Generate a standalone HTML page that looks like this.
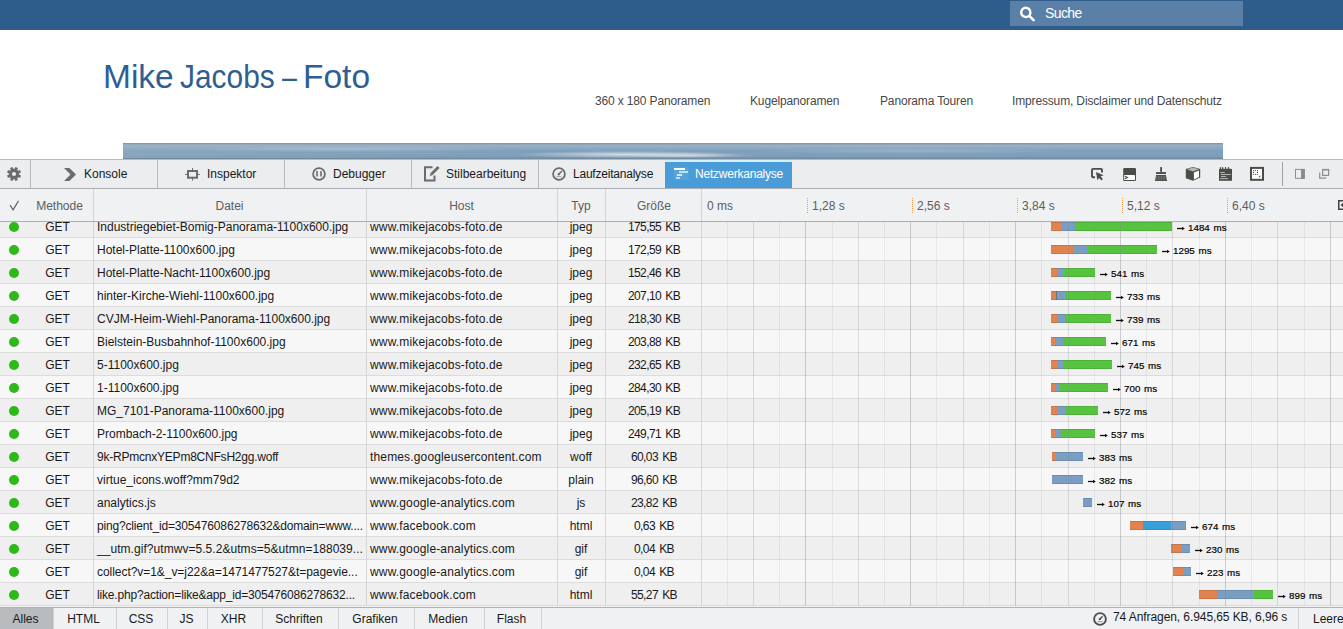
<!DOCTYPE html><html><head><meta charset="utf-8"><style>
*{margin:0;padding:0;box-sizing:border-box}
html,body{width:1343px;height:629px;overflow:hidden;background:#fff;font-family:"Liberation Sans",sans-serif}
.ab{position:absolute}
.t{position:absolute;white-space:nowrap;font-size:12px;line-height:14px}
.dev{color:#18191a}
</style></head><body>

<div class="ab" style="left:0;top:0;width:1343px;height:30px;background:#2e5d8c"></div>
<div class="ab" style="left:1010px;top:1px;width:233px;height:25px;background:#5a80a8"></div>
<svg class="ab" style="left:1018px;top:4px" width="20" height="20" viewBox="0 0 20 20"><circle cx="7.8" cy="8.4" r="4.6" fill="none" stroke="#fff" stroke-width="2.4"/><line x1="11.2" y1="11.8" x2="15.6" y2="16.2" stroke="#fff" stroke-width="2.6" stroke-linecap="round"/></svg>
<div class="t" style="left:1045px;top:5px;font-size:14px;line-height:16px;color:#fff;letter-spacing:-0.6px">Suche</div>
<div class="t" style="left:103px;top:57px;font-size:34px;line-height:39px;color:#2f5e93;transform:scaleX(0.985);transform-origin:0 0">Mike</div>
<div class="t" style="left:180px;top:57px;font-size:34px;line-height:39px;color:#2f5e93;transform:scaleX(0.879);transform-origin:0 0">Jacobs</div>
<div class="t" style="left:282px;top:57px;font-size:34px;line-height:39px;color:#2f5e93;transform:scaleX(0.79);transform-origin:0 0">–</div>
<div class="t" style="left:303px;top:57px;font-size:34px;line-height:39px;color:#2f5e93;transform:scaleX(0.985);transform-origin:0 0">Foto</div>
<div class="t" style="left:595px;top:94px;font-size:12px;line-height:14px;color:#474747;letter-spacing:-0.15px">360 x 180 Panoramen</div>
<div class="t" style="left:750px;top:94px;font-size:12px;line-height:14px;color:#474747;letter-spacing:-0.15px">Kugelpanoramen</div>
<div class="t" style="left:880px;top:94px;font-size:12px;line-height:14px;color:#474747;letter-spacing:-0.15px">Panorama Touren</div>
<div class="t" style="left:1012px;top:94px;font-size:12px;line-height:14px;color:#474747;letter-spacing:-0.15px">Impressum, Disclaimer und Datenschutz</div>
<div class="ab" style="left:123px;top:143px;width:1100px;height:16px;overflow:hidden;background:linear-gradient(180deg,#8797a6 0,#8797a6 1px,#9ab2c5 2px,#91adc4 25%,#7ea0bd 50%,#809fba 75%,#7b97b0 92%,#6c8195 100%)"><div class="ab" style="left:0;top:1px;width:420px;height:14px;background:linear-gradient(90deg,rgba(160,180,195,0.35),rgba(160,180,195,0.15) 50%,rgba(160,180,195,0))"></div><div class="ab" style="left:390px;top:8px;width:230px;height:7px;border-radius:50%;background:radial-gradient(closest-side,rgba(228,232,236,0.85),rgba(228,232,236,0))"></div><div class="ab" style="left:500px;top:10px;width:130px;height:5px;border-radius:50%;background:radial-gradient(closest-side,rgba(238,240,242,0.6),rgba(238,240,242,0))"></div><div class="ab" style="left:60px;top:3px;width:320px;height:6px;border-radius:50%;background:radial-gradient(closest-side,rgba(200,212,222,0.45),rgba(200,212,222,0))"></div><div class="ab" style="left:640px;top:5px;width:300px;height:6px;border-radius:50%;background:radial-gradient(closest-side,rgba(200,212,222,0.35),rgba(200,212,222,0))"></div></div>
<div class="ab" style="left:0;top:159px;width:1343px;height:30px;background:#ebedef;border-top:1px solid #b6babf;border-bottom:1px solid #aaaeb3"></div>
<div class="ab" style="left:30px;top:160px;width:1px;height:28px;background:#babcbf"></div>
<div class="ab" style="left:157px;top:160px;width:1px;height:28px;background:#babcbf"></div>
<div class="ab" style="left:284px;top:160px;width:1px;height:28px;background:#babcbf"></div>
<div class="ab" style="left:411px;top:160px;width:1px;height:28px;background:#babcbf"></div>
<div class="ab" style="left:538px;top:160px;width:1px;height:28px;background:#babcbf"></div>
<div class="ab" style="left:665px;top:160px;width:127px;height:2px;background:#d4f1fb"></div>
<div class="ab" style="left:665px;top:162px;width:127px;height:26px;background:#4a9cd8"></div>
<div class="ab" style="left:1282px;top:162px;width:1px;height:24px;background:#9ea2a6"></div>
<div class="t dev" style="left:84px;top:167px;letter-spacing:0px">Konsole</div>
<div class="t dev" style="left:207px;top:167px;letter-spacing:0px">Inspektor</div>
<div class="t dev" style="left:333px;top:167px;letter-spacing:0px">Debugger</div>
<div class="t dev" style="left:446px;top:167px;letter-spacing:0px">Stilbearbeitung</div>
<div class="t dev" style="left:573px;top:167px;letter-spacing:-0.22px">Laufzeitanalyse</div>
<div class="t" style="left:695px;top:167px;color:#fff;letter-spacing:-0.22px">Netzwerkanalyse</div>
<div class="ab" style="left:0;top:189px;width:1343px;height:33px;background:#f0f1f2;border-bottom:1px solid #aaaeb3"></div>
<svg class="ab" style="left:9px;top:199px" width="12" height="12"><path d="M1.1 6.1L4.1 10.9L9.5 1.9" fill="none" stroke="#5a5d61" stroke-width="1.1"/></svg>
<div class="t" style="left:28px;top:199px;width:63px;text-align:center;color:#5a5d61">Methode</div>
<div class="t" style="left:93px;top:199px;width:273px;text-align:center;color:#5a5d61">Datei</div>
<div class="t" style="left:366px;top:199px;width:191px;text-align:center;color:#5a5d61">Host</div>
<div class="t" style="left:557px;top:199px;width:48px;text-align:center;color:#5a5d61">Typ</div>
<div class="t" style="left:606px;top:199px;width:96px;text-align:center;color:#5a5d61">Größe</div>
<div class="ab" style="left:93px;top:189px;width:1px;height:32px;background:#d2d4d7"></div>
<div class="ab" style="left:366px;top:189px;width:1px;height:32px;background:#d2d4d7"></div>
<div class="ab" style="left:557px;top:189px;width:1px;height:32px;background:#d2d4d7"></div>
<div class="ab" style="left:605px;top:189px;width:1px;height:32px;background:#d2d4d7"></div>
<div class="ab" style="left:701px;top:189px;width:1px;height:32px;background:#d2d4d7"></div>
<div class="t" style="left:707px;top:199px;color:#5a5d61">0 ms</div>
<div class="t" style="left:812px;top:199px;color:#5a5d61">1,28 s</div>
<div class="t" style="left:917px;top:199px;color:#5a5d61">2,56 s</div>
<div class="t" style="left:1022px;top:199px;color:#5a5d61">3,84 s</div>
<div class="t" style="left:1127px;top:199px;color:#5a5d61">5,12 s</div>
<div class="t" style="left:1232px;top:199px;color:#5a5d61">6,40 s</div>
<div class="ab" style="left:807px;top:198px;width:1px;height:15px;background:repeating-linear-gradient(180deg,#e8a050 0 1px,transparent 1px 2px)"></div>
<div class="ab" style="left:912px;top:198px;width:1px;height:15px;background:repeating-linear-gradient(180deg,#e8a050 0 1px,transparent 1px 2px)"></div>
<div class="ab" style="left:1017px;top:198px;width:1px;height:15px;background:repeating-linear-gradient(180deg,#e8a050 0 1px,transparent 1px 2px)"></div>
<div class="ab" style="left:1122px;top:198px;width:1px;height:15px;background:repeating-linear-gradient(180deg,#e8a050 0 1px,transparent 1px 2px)"></div>
<div class="ab" style="left:1227px;top:198px;width:1px;height:15px;background:repeating-linear-gradient(180deg,#e8a050 0 1px,transparent 1px 2px)"></div>
<svg class="ab" style="left:1338px;top:200px" width="6" height="10"><rect x="0.75" y="0.75" width="9" height="8.5" fill="none" stroke="#404040" stroke-width="1.5"/><path d="M2.5 5L5.5 2.5V7.5Z" fill="#404040"/></svg>
<div class="ab" style="left:0;top:222px;width:1343px;height:384px;overflow:hidden">
<div class="ab" style="left:0;top:-7px;width:1343px;height:23px;background:#efefef;border-bottom:1px solid #dcdcdc"></div>
<div class="ab" style="left:0;top:16px;width:1343px;height:23px;background:#f7f7f7;border-bottom:1px solid #dcdcdc"></div>
<div class="ab" style="left:0;top:39px;width:1343px;height:23px;background:#efefef;border-bottom:1px solid #dcdcdc"></div>
<div class="ab" style="left:0;top:62px;width:1343px;height:23px;background:#f7f7f7;border-bottom:1px solid #dcdcdc"></div>
<div class="ab" style="left:0;top:85px;width:1343px;height:23px;background:#efefef;border-bottom:1px solid #dcdcdc"></div>
<div class="ab" style="left:0;top:108px;width:1343px;height:23px;background:#f7f7f7;border-bottom:1px solid #dcdcdc"></div>
<div class="ab" style="left:0;top:131px;width:1343px;height:23px;background:#efefef;border-bottom:1px solid #dcdcdc"></div>
<div class="ab" style="left:0;top:154px;width:1343px;height:23px;background:#f7f7f7;border-bottom:1px solid #dcdcdc"></div>
<div class="ab" style="left:0;top:177px;width:1343px;height:23px;background:#efefef;border-bottom:1px solid #dcdcdc"></div>
<div class="ab" style="left:0;top:200px;width:1343px;height:23px;background:#f7f7f7;border-bottom:1px solid #dcdcdc"></div>
<div class="ab" style="left:0;top:223px;width:1343px;height:23px;background:#efefef;border-bottom:1px solid #dcdcdc"></div>
<div class="ab" style="left:0;top:246px;width:1343px;height:23px;background:#f7f7f7;border-bottom:1px solid #dcdcdc"></div>
<div class="ab" style="left:0;top:269px;width:1343px;height:23px;background:#efefef;border-bottom:1px solid #dcdcdc"></div>
<div class="ab" style="left:0;top:292px;width:1343px;height:23px;background:#f7f7f7;border-bottom:1px solid #dcdcdc"></div>
<div class="ab" style="left:0;top:315px;width:1343px;height:23px;background:#efefef;border-bottom:1px solid #dcdcdc"></div>
<div class="ab" style="left:0;top:338px;width:1343px;height:23px;background:#f7f7f7;border-bottom:1px solid #dcdcdc"></div>
<div class="ab" style="left:0;top:361px;width:1343px;height:23px;background:#efefef;border-bottom:1px solid #dcdcdc"></div>
</div>
<div class="ab" style="left:0;top:222px;width:1343px;height:384px;overflow:hidden">
<div class="ab" style="left:1051px;top:0px;width:11px;height:9px;background:#e0834f;box-shadow:inset 0 1px rgba(0,0,0,0.10),inset 0 -1px rgba(0,0,0,0.10)"></div>
<div class="ab" style="left:1062px;top:0px;width:13px;height:9px;background:#7a9dc2;box-shadow:inset 0 1px rgba(0,0,0,0.10),inset 0 -1px rgba(0,0,0,0.10)"></div>
<div class="ab" style="left:1075px;top:0px;width:97px;height:9px;background:#56c43e;box-shadow:inset 0 1px rgba(0,0,0,0.10),inset 0 -1px rgba(0,0,0,0.10)"></div>
<div class="ab" style="left:1051px;top:23px;width:22px;height:9px;background:#e0834f;box-shadow:inset 0 1px rgba(0,0,0,0.10),inset 0 -1px rgba(0,0,0,0.10)"></div>
<div class="ab" style="left:1073px;top:23px;width:14px;height:9px;background:#7a9dc2;box-shadow:inset 0 1px rgba(0,0,0,0.10),inset 0 -1px rgba(0,0,0,0.10)"></div>
<div class="ab" style="left:1087px;top:23px;width:70px;height:9px;background:#56c43e;box-shadow:inset 0 1px rgba(0,0,0,0.10),inset 0 -1px rgba(0,0,0,0.10)"></div>
<div class="ab" style="left:1051px;top:46px;width:6px;height:9px;background:#e0834f;box-shadow:inset 0 1px rgba(0,0,0,0.10),inset 0 -1px rgba(0,0,0,0.10)"></div>
<div class="ab" style="left:1057px;top:46px;width:7px;height:9px;background:#7a9dc2;box-shadow:inset 0 1px rgba(0,0,0,0.10),inset 0 -1px rgba(0,0,0,0.10)"></div>
<div class="ab" style="left:1064px;top:46px;width:31px;height:9px;background:#56c43e;box-shadow:inset 0 1px rgba(0,0,0,0.10),inset 0 -1px rgba(0,0,0,0.10)"></div>
<div class="ab" style="left:1051px;top:69px;width:5px;height:9px;background:#e0834f;box-shadow:inset 0 1px rgba(0,0,0,0.10),inset 0 -1px rgba(0,0,0,0.10)"></div>
<div class="ab" style="left:1056px;top:69px;width:1px;height:9px;background:#6a7580;box-shadow:inset 0 1px rgba(0,0,0,0.10),inset 0 -1px rgba(0,0,0,0.10)"></div>
<div class="ab" style="left:1057px;top:69px;width:9px;height:9px;background:#7a9dc2;box-shadow:inset 0 1px rgba(0,0,0,0.10),inset 0 -1px rgba(0,0,0,0.10)"></div>
<div class="ab" style="left:1066px;top:69px;width:45px;height:9px;background:#56c43e;box-shadow:inset 0 1px rgba(0,0,0,0.10),inset 0 -1px rgba(0,0,0,0.10)"></div>
<div class="ab" style="left:1051px;top:92px;width:6px;height:9px;background:#e0834f;box-shadow:inset 0 1px rgba(0,0,0,0.10),inset 0 -1px rgba(0,0,0,0.10)"></div>
<div class="ab" style="left:1057px;top:92px;width:8px;height:9px;background:#7a9dc2;box-shadow:inset 0 1px rgba(0,0,0,0.10),inset 0 -1px rgba(0,0,0,0.10)"></div>
<div class="ab" style="left:1065px;top:92px;width:46px;height:9px;background:#56c43e;box-shadow:inset 0 1px rgba(0,0,0,0.10),inset 0 -1px rgba(0,0,0,0.10)"></div>
<div class="ab" style="left:1051px;top:115px;width:4px;height:9px;background:#e0834f;box-shadow:inset 0 1px rgba(0,0,0,0.10),inset 0 -1px rgba(0,0,0,0.10)"></div>
<div class="ab" style="left:1055px;top:115px;width:8px;height:9px;background:#7a9dc2;box-shadow:inset 0 1px rgba(0,0,0,0.10),inset 0 -1px rgba(0,0,0,0.10)"></div>
<div class="ab" style="left:1063px;top:115px;width:43px;height:9px;background:#56c43e;box-shadow:inset 0 1px rgba(0,0,0,0.10),inset 0 -1px rgba(0,0,0,0.10)"></div>
<div class="ab" style="left:1051px;top:138px;width:6px;height:9px;background:#e0834f;box-shadow:inset 0 1px rgba(0,0,0,0.10),inset 0 -1px rgba(0,0,0,0.10)"></div>
<div class="ab" style="left:1057px;top:138px;width:6px;height:9px;background:#7a9dc2;box-shadow:inset 0 1px rgba(0,0,0,0.10),inset 0 -1px rgba(0,0,0,0.10)"></div>
<div class="ab" style="left:1063px;top:138px;width:49px;height:9px;background:#56c43e;box-shadow:inset 0 1px rgba(0,0,0,0.10),inset 0 -1px rgba(0,0,0,0.10)"></div>
<div class="ab" style="left:1051px;top:161px;width:5px;height:9px;background:#e0834f;box-shadow:inset 0 1px rgba(0,0,0,0.10),inset 0 -1px rgba(0,0,0,0.10)"></div>
<div class="ab" style="left:1056px;top:161px;width:4px;height:9px;background:#7a9dc2;box-shadow:inset 0 1px rgba(0,0,0,0.10),inset 0 -1px rgba(0,0,0,0.10)"></div>
<div class="ab" style="left:1060px;top:161px;width:48px;height:9px;background:#56c43e;box-shadow:inset 0 1px rgba(0,0,0,0.10),inset 0 -1px rgba(0,0,0,0.10)"></div>
<div class="ab" style="left:1051px;top:184px;width:6px;height:9px;background:#e0834f;box-shadow:inset 0 1px rgba(0,0,0,0.10),inset 0 -1px rgba(0,0,0,0.10)"></div>
<div class="ab" style="left:1057px;top:184px;width:8px;height:9px;background:#7a9dc2;box-shadow:inset 0 1px rgba(0,0,0,0.10),inset 0 -1px rgba(0,0,0,0.10)"></div>
<div class="ab" style="left:1065px;top:184px;width:33px;height:9px;background:#56c43e;box-shadow:inset 0 1px rgba(0,0,0,0.10),inset 0 -1px rgba(0,0,0,0.10)"></div>
<div class="ab" style="left:1051px;top:207px;width:5px;height:9px;background:#e0834f;box-shadow:inset 0 1px rgba(0,0,0,0.10),inset 0 -1px rgba(0,0,0,0.10)"></div>
<div class="ab" style="left:1056px;top:207px;width:5px;height:9px;background:#7a9dc2;box-shadow:inset 0 1px rgba(0,0,0,0.10),inset 0 -1px rgba(0,0,0,0.10)"></div>
<div class="ab" style="left:1061px;top:207px;width:34px;height:9px;background:#56c43e;box-shadow:inset 0 1px rgba(0,0,0,0.10),inset 0 -1px rgba(0,0,0,0.10)"></div>
<div class="ab" style="left:1052px;top:230px;width:4px;height:9px;background:#e0834f;box-shadow:inset 0 1px rgba(0,0,0,0.10),inset 0 -1px rgba(0,0,0,0.10)"></div>
<div class="ab" style="left:1056px;top:230px;width:27px;height:9px;background:#7a9dc2;box-shadow:inset 0 1px rgba(0,0,0,0.10),inset 0 -1px rgba(0,0,0,0.10)"></div>
<div class="ab" style="left:1052px;top:253px;width:31px;height:9px;background:#7a9dc2;box-shadow:inset 0 1px rgba(0,0,0,0.10),inset 0 -1px rgba(0,0,0,0.10)"></div>
<div class="ab" style="left:1083px;top:276px;width:9px;height:9px;background:#7a9dc2;box-shadow:inset 0 1px rgba(0,0,0,0.10),inset 0 -1px rgba(0,0,0,0.10)"></div>
<div class="ab" style="left:1130px;top:299px;width:13px;height:9px;background:#e0834f;box-shadow:inset 0 1px rgba(0,0,0,0.10),inset 0 -1px rgba(0,0,0,0.10)"></div>
<div class="ab" style="left:1143px;top:299px;width:28px;height:9px;background:#36a0da;box-shadow:inset 0 1px rgba(0,0,0,0.10),inset 0 -1px rgba(0,0,0,0.10)"></div>
<div class="ab" style="left:1171px;top:299px;width:14px;height:9px;background:#7a9dc2;box-shadow:inset 0 1px rgba(0,0,0,0.10),inset 0 -1px rgba(0,0,0,0.10)"></div>
<div class="ab" style="left:1185px;top:299px;width:1px;height:9px;background:#56c43e;box-shadow:inset 0 1px rgba(0,0,0,0.10),inset 0 -1px rgba(0,0,0,0.10)"></div>
<div class="ab" style="left:1171px;top:322px;width:11px;height:9px;background:#e0834f;box-shadow:inset 0 1px rgba(0,0,0,0.10),inset 0 -1px rgba(0,0,0,0.10)"></div>
<div class="ab" style="left:1182px;top:322px;width:8px;height:9px;background:#7a9dc2;box-shadow:inset 0 1px rgba(0,0,0,0.10),inset 0 -1px rgba(0,0,0,0.10)"></div>
<div class="ab" style="left:1173px;top:345px;width:10px;height:9px;background:#e0834f;box-shadow:inset 0 1px rgba(0,0,0,0.10),inset 0 -1px rgba(0,0,0,0.10)"></div>
<div class="ab" style="left:1183px;top:345px;width:8px;height:9px;background:#7a9dc2;box-shadow:inset 0 1px rgba(0,0,0,0.10),inset 0 -1px rgba(0,0,0,0.10)"></div>
<div class="ab" style="left:1199px;top:368px;width:18px;height:9px;background:#e0834f;box-shadow:inset 0 1px rgba(0,0,0,0.10),inset 0 -1px rgba(0,0,0,0.10)"></div>
<div class="ab" style="left:1217px;top:368px;width:37px;height:9px;background:#7a9dc2;box-shadow:inset 0 1px rgba(0,0,0,0.10),inset 0 -1px rgba(0,0,0,0.10)"></div>
<div class="ab" style="left:1254px;top:368px;width:19px;height:9px;background:#56c43e;box-shadow:inset 0 1px rgba(0,0,0,0.10),inset 0 -1px rgba(0,0,0,0.10)"></div>
<div class="ab" style="left:727px;top:0;width:1px;height:384px;background:rgba(128,136,144,0.125)"></div>
<div class="ab" style="left:753px;top:0;width:1px;height:384px;background:rgba(128,136,144,0.25)"></div>
<div class="ab" style="left:779px;top:0;width:1px;height:384px;background:rgba(128,136,144,0.125)"></div>
<div class="ab" style="left:805px;top:0;width:1px;height:384px;background:rgba(128,136,144,0.376)"></div>
<div class="ab" style="left:832px;top:0;width:1px;height:384px;background:rgba(128,136,144,0.125)"></div>
<div class="ab" style="left:858px;top:0;width:1px;height:384px;background:rgba(128,136,144,0.25)"></div>
<div class="ab" style="left:884px;top:0;width:1px;height:384px;background:rgba(128,136,144,0.125)"></div>
<div class="ab" style="left:910px;top:0;width:1px;height:384px;background:rgba(128,136,144,0.376)"></div>
<div class="ab" style="left:936px;top:0;width:1px;height:384px;background:rgba(128,136,144,0.125)"></div>
<div class="ab" style="left:963px;top:0;width:1px;height:384px;background:rgba(128,136,144,0.25)"></div>
<div class="ab" style="left:989px;top:0;width:1px;height:384px;background:rgba(128,136,144,0.125)"></div>
<div class="ab" style="left:1015px;top:0;width:1px;height:384px;background:rgba(128,136,144,0.376)"></div>
<div class="ab" style="left:1041px;top:0;width:1px;height:384px;background:rgba(128,136,144,0.125)"></div>
<div class="ab" style="left:1068px;top:0;width:1px;height:384px;background:rgba(128,136,144,0.25)"></div>
<div class="ab" style="left:1094px;top:0;width:1px;height:384px;background:rgba(128,136,144,0.125)"></div>
<div class="ab" style="left:1120px;top:0;width:1px;height:384px;background:rgba(128,136,144,0.376)"></div>
<div class="ab" style="left:1146px;top:0;width:1px;height:384px;background:rgba(128,136,144,0.125)"></div>
<div class="ab" style="left:1172px;top:0;width:1px;height:384px;background:rgba(128,136,144,0.25)"></div>
<div class="ab" style="left:1199px;top:0;width:1px;height:384px;background:rgba(128,136,144,0.125)"></div>
<div class="ab" style="left:1225px;top:0;width:1px;height:384px;background:rgba(128,136,144,0.376)"></div>
<div class="ab" style="left:1251px;top:0;width:1px;height:384px;background:rgba(128,136,144,0.125)"></div>
<div class="ab" style="left:1277px;top:0;width:1px;height:384px;background:rgba(128,136,144,0.25)"></div>
<div class="ab" style="left:1304px;top:0;width:1px;height:384px;background:rgba(128,136,144,0.125)"></div>
<div class="ab" style="left:1330px;top:0;width:1px;height:384px;background:rgba(128,136,144,0.376)"></div>
<div class="ab" style="left:93px;top:0;width:1px;height:384px;background:#d6d6d6"></div>
<div class="ab" style="left:366px;top:0;width:1px;height:384px;background:#d6d6d6"></div>
<div class="ab" style="left:557px;top:0;width:1px;height:384px;background:#d6d6d6"></div>
<div class="ab" style="left:605px;top:0;width:1px;height:384px;background:#d6d6d6"></div>
<div class="ab" style="left:701px;top:0;width:1px;height:384px;background:#d6d6d6"></div>
<div class="ab" style="left:9px;top:0px;width:10px;height:10px;border-radius:50%;background:#2eb81a"></div>
<div class="t dev" style="left:26px;top:-2px;width:63px;text-align:center">GET</div>
<div class="t dev" style="left:97px;top:-2px;letter-spacing:0px">Industriegebiet-Bomig-Panorama-1100x600.jpg</div>
<div class="t dev" style="left:370px;top:-2px;letter-spacing:0.15px">www.mikejacobs-foto.de</div>
<div class="t dev" style="left:557px;top:-2px;width:48px;text-align:center">jpeg</div>
<div class="t dev" style="left:606px;top:-2px;width:96px;text-align:center;letter-spacing:-0.6px;word-spacing:1.5px">175,55 KB</div>
<svg class="ab" style="left:1177px;top:4px" width="8" height="5"><path d="M0 2.5H6" stroke="#111" stroke-width="1.3"/><path d="M5 0.8L7.8 2.5L5 4.2Z" fill="#111"/></svg>
<div class="t dev" style="left:1188px;top:0px;font-size:9.8px;line-height:12px;word-spacing:1px;color:#000;-webkit-text-stroke:0.18px #000">1484 ms</div>
<div class="ab" style="left:9px;top:23px;width:10px;height:10px;border-radius:50%;background:#2eb81a"></div>
<div class="t dev" style="left:26px;top:21px;width:63px;text-align:center">GET</div>
<div class="t dev" style="left:97px;top:21px;letter-spacing:0px">Hotel-Platte-1100x600.jpg</div>
<div class="t dev" style="left:370px;top:21px;letter-spacing:0.15px">www.mikejacobs-foto.de</div>
<div class="t dev" style="left:557px;top:21px;width:48px;text-align:center">jpeg</div>
<div class="t dev" style="left:606px;top:21px;width:96px;text-align:center;letter-spacing:-0.6px;word-spacing:1.5px">172,59 KB</div>
<svg class="ab" style="left:1162px;top:27px" width="8" height="5"><path d="M0 2.5H6" stroke="#111" stroke-width="1.3"/><path d="M5 0.8L7.8 2.5L5 4.2Z" fill="#111"/></svg>
<div class="t dev" style="left:1173px;top:23px;font-size:9.8px;line-height:12px;word-spacing:1px;color:#000;-webkit-text-stroke:0.18px #000">1295 ms</div>
<div class="ab" style="left:9px;top:46px;width:10px;height:10px;border-radius:50%;background:#2eb81a"></div>
<div class="t dev" style="left:26px;top:44px;width:63px;text-align:center">GET</div>
<div class="t dev" style="left:97px;top:44px;letter-spacing:0px">Hotel-Platte-Nacht-1100x600.jpg</div>
<div class="t dev" style="left:370px;top:44px;letter-spacing:0.15px">www.mikejacobs-foto.de</div>
<div class="t dev" style="left:557px;top:44px;width:48px;text-align:center">jpeg</div>
<div class="t dev" style="left:606px;top:44px;width:96px;text-align:center;letter-spacing:-0.6px;word-spacing:1.5px">152,46 KB</div>
<svg class="ab" style="left:1100px;top:50px" width="8" height="5"><path d="M0 2.5H6" stroke="#111" stroke-width="1.3"/><path d="M5 0.8L7.8 2.5L5 4.2Z" fill="#111"/></svg>
<div class="t dev" style="left:1111px;top:46px;font-size:9.8px;line-height:12px;word-spacing:1px;color:#000;-webkit-text-stroke:0.18px #000">541 ms</div>
<div class="ab" style="left:9px;top:69px;width:10px;height:10px;border-radius:50%;background:#2eb81a"></div>
<div class="t dev" style="left:26px;top:67px;width:63px;text-align:center">GET</div>
<div class="t dev" style="left:97px;top:67px;letter-spacing:0px">hinter-Kirche-Wiehl-1100x600.jpg</div>
<div class="t dev" style="left:370px;top:67px;letter-spacing:0.15px">www.mikejacobs-foto.de</div>
<div class="t dev" style="left:557px;top:67px;width:48px;text-align:center">jpeg</div>
<div class="t dev" style="left:606px;top:67px;width:96px;text-align:center;letter-spacing:-0.6px;word-spacing:1.5px">207,10 KB</div>
<svg class="ab" style="left:1116px;top:73px" width="8" height="5"><path d="M0 2.5H6" stroke="#111" stroke-width="1.3"/><path d="M5 0.8L7.8 2.5L5 4.2Z" fill="#111"/></svg>
<div class="t dev" style="left:1127px;top:69px;font-size:9.8px;line-height:12px;word-spacing:1px;color:#000;-webkit-text-stroke:0.18px #000">733 ms</div>
<div class="ab" style="left:9px;top:92px;width:10px;height:10px;border-radius:50%;background:#2eb81a"></div>
<div class="t dev" style="left:26px;top:90px;width:63px;text-align:center">GET</div>
<div class="t dev" style="left:97px;top:90px;letter-spacing:0px">CVJM-Heim-Wiehl-Panorama-1100x600.jpg</div>
<div class="t dev" style="left:370px;top:90px;letter-spacing:0.15px">www.mikejacobs-foto.de</div>
<div class="t dev" style="left:557px;top:90px;width:48px;text-align:center">jpeg</div>
<div class="t dev" style="left:606px;top:90px;width:96px;text-align:center;letter-spacing:-0.6px;word-spacing:1.5px">218,30 KB</div>
<svg class="ab" style="left:1116px;top:96px" width="8" height="5"><path d="M0 2.5H6" stroke="#111" stroke-width="1.3"/><path d="M5 0.8L7.8 2.5L5 4.2Z" fill="#111"/></svg>
<div class="t dev" style="left:1127px;top:92px;font-size:9.8px;line-height:12px;word-spacing:1px;color:#000;-webkit-text-stroke:0.18px #000">739 ms</div>
<div class="ab" style="left:9px;top:115px;width:10px;height:10px;border-radius:50%;background:#2eb81a"></div>
<div class="t dev" style="left:26px;top:113px;width:63px;text-align:center">GET</div>
<div class="t dev" style="left:97px;top:113px;letter-spacing:0px">Bielstein-Busbahnhof-1100x600.jpg</div>
<div class="t dev" style="left:370px;top:113px;letter-spacing:0.15px">www.mikejacobs-foto.de</div>
<div class="t dev" style="left:557px;top:113px;width:48px;text-align:center">jpeg</div>
<div class="t dev" style="left:606px;top:113px;width:96px;text-align:center;letter-spacing:-0.6px;word-spacing:1.5px">203,88 KB</div>
<svg class="ab" style="left:1111px;top:119px" width="8" height="5"><path d="M0 2.5H6" stroke="#111" stroke-width="1.3"/><path d="M5 0.8L7.8 2.5L5 4.2Z" fill="#111"/></svg>
<div class="t dev" style="left:1122px;top:115px;font-size:9.8px;line-height:12px;word-spacing:1px;color:#000;-webkit-text-stroke:0.18px #000">671 ms</div>
<div class="ab" style="left:9px;top:138px;width:10px;height:10px;border-radius:50%;background:#2eb81a"></div>
<div class="t dev" style="left:26px;top:136px;width:63px;text-align:center">GET</div>
<div class="t dev" style="left:97px;top:136px;letter-spacing:0px">5-1100x600.jpg</div>
<div class="t dev" style="left:370px;top:136px;letter-spacing:0.15px">www.mikejacobs-foto.de</div>
<div class="t dev" style="left:557px;top:136px;width:48px;text-align:center">jpeg</div>
<div class="t dev" style="left:606px;top:136px;width:96px;text-align:center;letter-spacing:-0.6px;word-spacing:1.5px">232,65 KB</div>
<svg class="ab" style="left:1117px;top:142px" width="8" height="5"><path d="M0 2.5H6" stroke="#111" stroke-width="1.3"/><path d="M5 0.8L7.8 2.5L5 4.2Z" fill="#111"/></svg>
<div class="t dev" style="left:1128px;top:138px;font-size:9.8px;line-height:12px;word-spacing:1px;color:#000;-webkit-text-stroke:0.18px #000">745 ms</div>
<div class="ab" style="left:9px;top:161px;width:10px;height:10px;border-radius:50%;background:#2eb81a"></div>
<div class="t dev" style="left:26px;top:159px;width:63px;text-align:center">GET</div>
<div class="t dev" style="left:97px;top:159px;letter-spacing:0px">1-1100x600.jpg</div>
<div class="t dev" style="left:370px;top:159px;letter-spacing:0.15px">www.mikejacobs-foto.de</div>
<div class="t dev" style="left:557px;top:159px;width:48px;text-align:center">jpeg</div>
<div class="t dev" style="left:606px;top:159px;width:96px;text-align:center;letter-spacing:-0.6px;word-spacing:1.5px">284,30 KB</div>
<svg class="ab" style="left:1113px;top:165px" width="8" height="5"><path d="M0 2.5H6" stroke="#111" stroke-width="1.3"/><path d="M5 0.8L7.8 2.5L5 4.2Z" fill="#111"/></svg>
<div class="t dev" style="left:1124px;top:161px;font-size:9.8px;line-height:12px;word-spacing:1px;color:#000;-webkit-text-stroke:0.18px #000">700 ms</div>
<div class="ab" style="left:9px;top:184px;width:10px;height:10px;border-radius:50%;background:#2eb81a"></div>
<div class="t dev" style="left:26px;top:182px;width:63px;text-align:center">GET</div>
<div class="t dev" style="left:97px;top:182px;letter-spacing:0px">MG_7101-Panorama-1100x600.jpg</div>
<div class="t dev" style="left:370px;top:182px;letter-spacing:0.15px">www.mikejacobs-foto.de</div>
<div class="t dev" style="left:557px;top:182px;width:48px;text-align:center">jpeg</div>
<div class="t dev" style="left:606px;top:182px;width:96px;text-align:center;letter-spacing:-0.6px;word-spacing:1.5px">205,19 KB</div>
<svg class="ab" style="left:1103px;top:188px" width="8" height="5"><path d="M0 2.5H6" stroke="#111" stroke-width="1.3"/><path d="M5 0.8L7.8 2.5L5 4.2Z" fill="#111"/></svg>
<div class="t dev" style="left:1114px;top:184px;font-size:9.8px;line-height:12px;word-spacing:1px;color:#000;-webkit-text-stroke:0.18px #000">572 ms</div>
<div class="ab" style="left:9px;top:207px;width:10px;height:10px;border-radius:50%;background:#2eb81a"></div>
<div class="t dev" style="left:26px;top:205px;width:63px;text-align:center">GET</div>
<div class="t dev" style="left:97px;top:205px;letter-spacing:0px">Prombach-2-1100x600.jpg</div>
<div class="t dev" style="left:370px;top:205px;letter-spacing:0.15px">www.mikejacobs-foto.de</div>
<div class="t dev" style="left:557px;top:205px;width:48px;text-align:center">jpeg</div>
<div class="t dev" style="left:606px;top:205px;width:96px;text-align:center;letter-spacing:-0.6px;word-spacing:1.5px">249,71 KB</div>
<svg class="ab" style="left:1100px;top:211px" width="8" height="5"><path d="M0 2.5H6" stroke="#111" stroke-width="1.3"/><path d="M5 0.8L7.8 2.5L5 4.2Z" fill="#111"/></svg>
<div class="t dev" style="left:1111px;top:207px;font-size:9.8px;line-height:12px;word-spacing:1px;color:#000;-webkit-text-stroke:0.18px #000">537 ms</div>
<div class="ab" style="left:9px;top:230px;width:10px;height:10px;border-radius:50%;background:#2eb81a"></div>
<div class="t dev" style="left:26px;top:228px;width:63px;text-align:center">GET</div>
<div class="t dev" style="left:97px;top:228px;letter-spacing:-0.22px">9k-RPmcnxYEPm8CNFsH2gg.woff</div>
<div class="t dev" style="left:370px;top:228px;letter-spacing:0.15px">themes.googleusercontent.com</div>
<div class="t dev" style="left:557px;top:228px;width:48px;text-align:center">woff</div>
<div class="t dev" style="left:606px;top:228px;width:96px;text-align:center;letter-spacing:-0.6px;word-spacing:1.5px">60,03 KB</div>
<svg class="ab" style="left:1088px;top:234px" width="8" height="5"><path d="M0 2.5H6" stroke="#111" stroke-width="1.3"/><path d="M5 0.8L7.8 2.5L5 4.2Z" fill="#111"/></svg>
<div class="t dev" style="left:1099px;top:230px;font-size:9.8px;line-height:12px;word-spacing:1px;color:#000;-webkit-text-stroke:0.18px #000">383 ms</div>
<div class="ab" style="left:9px;top:253px;width:10px;height:10px;border-radius:50%;background:#2eb81a"></div>
<div class="t dev" style="left:26px;top:251px;width:63px;text-align:center">GET</div>
<div class="t dev" style="left:97px;top:251px;letter-spacing:0px">virtue_icons.woff?mm79d2</div>
<div class="t dev" style="left:370px;top:251px;letter-spacing:0.15px">www.mikejacobs-foto.de</div>
<div class="t dev" style="left:557px;top:251px;width:48px;text-align:center">plain</div>
<div class="t dev" style="left:606px;top:251px;width:96px;text-align:center;letter-spacing:-0.6px;word-spacing:1.5px">96,60 KB</div>
<svg class="ab" style="left:1088px;top:257px" width="8" height="5"><path d="M0 2.5H6" stroke="#111" stroke-width="1.3"/><path d="M5 0.8L7.8 2.5L5 4.2Z" fill="#111"/></svg>
<div class="t dev" style="left:1099px;top:253px;font-size:9.8px;line-height:12px;word-spacing:1px;color:#000;-webkit-text-stroke:0.18px #000">382 ms</div>
<div class="ab" style="left:9px;top:276px;width:10px;height:10px;border-radius:50%;background:#2eb81a"></div>
<div class="t dev" style="left:26px;top:274px;width:63px;text-align:center">GET</div>
<div class="t dev" style="left:97px;top:274px;letter-spacing:0px">analytics.js</div>
<div class="t dev" style="left:370px;top:274px;letter-spacing:0.15px">www.google-analytics.com</div>
<div class="t dev" style="left:557px;top:274px;width:48px;text-align:center">js</div>
<div class="t dev" style="left:606px;top:274px;width:96px;text-align:center;letter-spacing:-0.6px;word-spacing:1.5px">23,82 KB</div>
<svg class="ab" style="left:1097px;top:280px" width="8" height="5"><path d="M0 2.5H6" stroke="#111" stroke-width="1.3"/><path d="M5 0.8L7.8 2.5L5 4.2Z" fill="#111"/></svg>
<div class="t dev" style="left:1108px;top:276px;font-size:9.8px;line-height:12px;word-spacing:1px;color:#000;-webkit-text-stroke:0.18px #000">107 ms</div>
<div class="ab" style="left:9px;top:299px;width:10px;height:10px;border-radius:50%;background:#2eb81a"></div>
<div class="t dev" style="left:26px;top:297px;width:63px;text-align:center">GET</div>
<div class="t dev" style="left:97px;top:297px;letter-spacing:-0.17px">ping?client_id=305476086278632&amp;domain=www....</div>
<div class="t dev" style="left:370px;top:297px;letter-spacing:0.15px">www.facebook.com</div>
<div class="t dev" style="left:557px;top:297px;width:48px;text-align:center">html</div>
<div class="t dev" style="left:606px;top:297px;width:96px;text-align:center;letter-spacing:-0.6px;word-spacing:1.5px">0,63 KB</div>
<svg class="ab" style="left:1191px;top:303px" width="8" height="5"><path d="M0 2.5H6" stroke="#111" stroke-width="1.3"/><path d="M5 0.8L7.8 2.5L5 4.2Z" fill="#111"/></svg>
<div class="t dev" style="left:1202px;top:299px;font-size:9.8px;line-height:12px;word-spacing:1px;color:#000;-webkit-text-stroke:0.18px #000">674 ms</div>
<div class="ab" style="left:9px;top:322px;width:10px;height:10px;border-radius:50%;background:#2eb81a"></div>
<div class="t dev" style="left:26px;top:320px;width:63px;text-align:center">GET</div>
<div class="t dev" style="left:97px;top:320px;letter-spacing:0.05px">__utm.gif?utmwv=5.5.2&amp;utms=5&amp;utmn=188039...</div>
<div class="t dev" style="left:370px;top:320px;letter-spacing:0.15px">www.google-analytics.com</div>
<div class="t dev" style="left:557px;top:320px;width:48px;text-align:center">gif</div>
<div class="t dev" style="left:606px;top:320px;width:96px;text-align:center;letter-spacing:-0.6px;word-spacing:1.5px">0,04 KB</div>
<svg class="ab" style="left:1195px;top:326px" width="8" height="5"><path d="M0 2.5H6" stroke="#111" stroke-width="1.3"/><path d="M5 0.8L7.8 2.5L5 4.2Z" fill="#111"/></svg>
<div class="t dev" style="left:1206px;top:322px;font-size:9.8px;line-height:12px;word-spacing:1px;color:#000;-webkit-text-stroke:0.18px #000">230 ms</div>
<div class="ab" style="left:9px;top:345px;width:10px;height:10px;border-radius:50%;background:#2eb81a"></div>
<div class="t dev" style="left:26px;top:343px;width:63px;text-align:center">GET</div>
<div class="t dev" style="left:97px;top:343px;letter-spacing:-0.05px">collect?v=1&amp;_v=j22&amp;a=1471477527&amp;t=pagevie...</div>
<div class="t dev" style="left:370px;top:343px;letter-spacing:0.15px">www.google-analytics.com</div>
<div class="t dev" style="left:557px;top:343px;width:48px;text-align:center">gif</div>
<div class="t dev" style="left:606px;top:343px;width:96px;text-align:center;letter-spacing:-0.6px;word-spacing:1.5px">0,04 KB</div>
<svg class="ab" style="left:1196px;top:349px" width="8" height="5"><path d="M0 2.5H6" stroke="#111" stroke-width="1.3"/><path d="M5 0.8L7.8 2.5L5 4.2Z" fill="#111"/></svg>
<div class="t dev" style="left:1207px;top:345px;font-size:9.8px;line-height:12px;word-spacing:1px;color:#000;-webkit-text-stroke:0.18px #000">223 ms</div>
<div class="ab" style="left:9px;top:368px;width:10px;height:10px;border-radius:50%;background:#2eb81a"></div>
<div class="t dev" style="left:26px;top:366px;width:63px;text-align:center">GET</div>
<div class="t dev" style="left:97px;top:366px;letter-spacing:-0.18px">like.php?action=like&amp;app_id=305476086278632...</div>
<div class="t dev" style="left:370px;top:366px;letter-spacing:0.15px">www.facebook.com</div>
<div class="t dev" style="left:557px;top:366px;width:48px;text-align:center">html</div>
<div class="t dev" style="left:606px;top:366px;width:96px;text-align:center;letter-spacing:-0.6px;word-spacing:1.5px">55,27 KB</div>
<svg class="ab" style="left:1278px;top:372px" width="8" height="5"><path d="M0 2.5H6" stroke="#111" stroke-width="1.3"/><path d="M5 0.8L7.8 2.5L5 4.2Z" fill="#111"/></svg>
<div class="t dev" style="left:1289px;top:368px;font-size:9.8px;line-height:12px;word-spacing:1px;color:#000;-webkit-text-stroke:0.18px #000">899 ms</div>
</div>
<div class="ab" style="left:0;top:606px;width:1343px;height:1px;background:#f2f2f2"></div>
<div class="ab" style="left:0;top:607px;width:1343px;height:22px;background:#f0f1f2;border-top:1px solid #b0b3b6"></div>
<div class="ab" style="left:0;top:608px;width:53px;height:21px;background:#b8bcbf"></div>
<div class="ab" style="left:53px;top:608px;width:1px;height:21px;background:#cfd2d5"></div>
<div class="ab" style="left:116px;top:608px;width:1px;height:21px;background:#cfd2d5"></div>
<div class="ab" style="left:167px;top:608px;width:1px;height:21px;background:#cfd2d5"></div>
<div class="ab" style="left:207px;top:608px;width:1px;height:21px;background:#cfd2d5"></div>
<div class="ab" style="left:262px;top:608px;width:1px;height:21px;background:#cfd2d5"></div>
<div class="ab" style="left:338px;top:608px;width:1px;height:21px;background:#cfd2d5"></div>
<div class="ab" style="left:414px;top:608px;width:1px;height:21px;background:#cfd2d5"></div>
<div class="ab" style="left:484px;top:608px;width:1px;height:21px;background:#cfd2d5"></div>
<div class="ab" style="left:541px;top:608px;width:1px;height:21px;background:#cfd2d5"></div>
<div class="ab" style="left:1298px;top:608px;width:1px;height:21px;background:#cfd2d5"></div>
<div class="t dev" style="left:-1px;top:612px;width:53px;text-align:center">Alles</div>
<div class="t dev" style="left:52px;top:612px;width:63px;text-align:center">HTML</div>
<div class="t dev" style="left:115px;top:612px;width:52px;text-align:center">CSS</div>
<div class="t dev" style="left:167px;top:612px;width:39px;text-align:center">JS</div>
<div class="t dev" style="left:206px;top:612px;width:55px;text-align:center">XHR</div>
<div class="t dev" style="left:261px;top:612px;width:76px;text-align:center">Schriften</div>
<div class="t dev" style="left:337px;top:612px;width:76px;text-align:center">Grafiken</div>
<div class="t dev" style="left:413px;top:612px;width:70px;text-align:center">Medien</div>
<div class="t dev" style="left:483px;top:612px;width:57px;text-align:center">Flash</div>
<svg class="ab" style="left:1092px;top:611px" width="16" height="16"><circle cx="8" cy="8" r="5.9" fill="none" stroke="#505050" stroke-width="1.9"/><path d="M7.8 8.2L10.6 5.2" stroke="#505050" stroke-width="1.4"/><circle cx="7.8" cy="8.2" r="1.1" fill="#505050"/><path d="M5.5 10.7H10.5" stroke="#505050" stroke-width="0.9" opacity="0.6"/></svg>
<div class="t dev" style="left:1113px;top:610px;letter-spacing:-0.08px">74 Anfragen, 6.945,65 KB, 6,96 s</div>
<div class="t dev" style="left:1313px;top:612px">Leeren</div>
<svg class="ab" style="left:0;top:0" width="1343" height="629">
<g fill="#6b6b6b"><circle cx="14" cy="174" r="5.2"/><rect x="12.6" y="167" width="2.8" height="14" transform="rotate(22.5 14 174)"/><rect x="12.6" y="167" width="2.8" height="14" transform="rotate(67.5 14 174)"/><rect x="12.6" y="167" width="2.8" height="14" transform="rotate(112.5 14 174)"/><rect x="12.6" y="167" width="2.8" height="14" transform="rotate(157.5 14 174)"/></g><circle cx="14" cy="174" r="2.1" fill="#ebedef"/>
<path d="M64 168H69.4L76 174.5L69.4 181H64L70.5 174.5Z" fill="#6b6b6b"/>
<rect x="188" y="171" width="9" height="6.7" fill="none" stroke="#6b6b6b" stroke-width="2"/>
<path d="M185 174.4H188M197 174.4H200M192.5 168V171M192.5 177.7V180.5" stroke="#6b6b6b" stroke-width="1"/>
<circle cx="319" cy="174" r="5.9" fill="none" stroke="#6b6b6b" stroke-width="1.8"/>
<rect x="316.2" y="171.1" width="1.6" height="5.4" fill="#6b6b6b"/><rect x="320.2" y="171.1" width="1.6" height="5.4" fill="#6b6b6b"/>
<path d="M432.5 167.2H425V180.6H434.5V175.5" fill="none" stroke="#6b6b6b" stroke-width="2"/>
<path d="M429.8 176.2L430.8 172.8L437.6 166L439.6 168L432.8 174.8Z" fill="#6b6b6b"/>
<circle cx="559" cy="174" r="5.9" fill="none" stroke="#6b6b6b" stroke-width="1.8"/>
<path d="M558.6 174.4L562 171" stroke="#6b6b6b" stroke-width="1.5"/><circle cx="558.6" cy="174.4" r="1.1" fill="#6b6b6b"/>
<path d="M556.5 176.6H561.5" stroke="#6b6b6b" stroke-width="0.8" opacity="0.7"/>
<rect x="673.5" y="166.7" width="15" height="13" fill="#ffffff" opacity="0.07"/>
<rect x="674" y="168" width="11" height="2" fill="#ffffff"/>
<rect x="679" y="171.1" width="9" height="1.8" fill="#cfe6f8"/>
<rect x="676.8" y="174" width="5.3" height="2" fill="#cfe6f8"/>
<rect x="676" y="177.1" width="4" height="1.8" fill="#cfe6f8"/>
<path d="M1095 177.2H1093A1 1 0 0 1 1092 176.2V169.9A1 1 0 0 1 1093 168.9H1101A1 1 0 0 1 1102 169.9V172.6" fill="none" stroke="#4b4c4a" stroke-width="1.9"/>
<path d="M1096 172L1103.6 175.3L1100.6 176.6L1102.9 179L1101.5 180.4L1099.1 178L1097.4 180.3Z" fill="#4b4c4a"/>
<rect x="1123.2" y="168" width="12.8" height="13" rx="1.2" fill="#4b4c4a"/>
<rect x="1124.2" y="175" width="10.8" height="5" rx="0.5" fill="#ffffff"/>
<path d="M1124.9 176.2L1127.6 177.5L1124.9 178.8" fill="none" stroke="#4b4c4a" stroke-width="1.1"/>
<rect x="1160.2" y="167.1" width="1.8" height="4.8" fill="#4b4c4a"/>
<rect x="1156" y="172.1" width="10" height="1.9" fill="#4b4c4a"/>
<path d="M1156 175H1166L1167.2 181H1154.8Z" fill="#707070"/>
<path d="M1156 175.5H1166M1155 180.3H1167M1157.7 176V180.5M1160.2 176V180.5M1162.7 176V180.5M1165.2 176V180.5" stroke="#4b4c4a" stroke-width="0.9"/>
<path d="M1193 166.9L1200.2 169.1V177.5L1193 180.7L1185.8 178.2V169.1Z" fill="#4b4c4a"/>
<path d="M1187 169.3L1193 167.6L1199 169.3L1193 171.5Z" fill="#b5b6b4"/>
<path d="M1193.9 172.6L1199 170.6V177L1193.9 179.4Z" fill="#ffffff"/>
<path d="M1219 169H1232V180.8H1219Z" fill="#4b4c4a"/>
<path d="M1219 171V169.2L1219.8 169V167.3Q1220 166.8 1220.9 166.9V168.6L1222 169V167.3Q1222.2 166.8 1223.1 166.9V168.6L1224.9 169V167.3Q1225.1 166.8 1226 166.9V168.6L1227.8 169V167.3Q1228 166.8 1228.9 166.9V168.6L1231.3 169L1232 169.8V171Z" fill="#4b4c4a"/>
<path d="M1220.2 172.6H1224.8M1221 174.5H1230.8M1221 176.5H1225.9M1220.2 178.6H1228" stroke="#b4b4b2" stroke-width="1"/>
<rect x="1251" y="167.9" width="12" height="11.9" fill="#ffffff" stroke="#4b4c4a" stroke-width="2"/>
<g fill="#4b4c4a"><circle cx="1253.6" cy="170.6" r="0.6"/><circle cx="1255.5" cy="170.6" r="0.6"/><circle cx="1257.4" cy="170.6" r="0.6"/><circle cx="1253.6" cy="172.4" r="0.6"/><circle cx="1257.4" cy="172.4" r="0.6"/><circle cx="1253.6" cy="174.3" r="0.6"/><circle cx="1255.5" cy="174.3" r="0.6"/><circle cx="1257.4" cy="174.3" r="0.6"/></g>
<path d="M1260.3 175.3V177.3H1258.3Z" fill="#4b4c4a"/>
<rect x="1295.5" y="169.4" width="8.8" height="8.9" fill="none" stroke="#8e8e8e" stroke-width="1"/>
<rect x="1301" y="169" width="3.8" height="9.8" fill="#8a8a8a"/>
<path d="M1322.6 169.6H1328.6V175.3H1322.6Z" fill="none" stroke="#8e8e8e" stroke-width="1.2"/><rect x="1322" y="168.9" width="7.2" height="1.5" fill="#8e8e8e"/>
<path d="M1319.7 172.4V178.2H1325.6V177.2" fill="none" stroke="#8e8e8e" stroke-width="1.2"/>
</svg>
</body></html>
